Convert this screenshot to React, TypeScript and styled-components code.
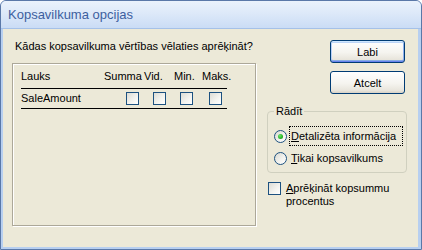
import * as React from "react";
import styled, { createGlobalStyle } from "styled-components";

const GlobalStyle = createGlobalStyle`
  html, body {
    margin: 0;
    padding: 0;
    background: #ffffff;
  }
  body {
    font-family: "Liberation Sans", Arial, sans-serif;
    font-size: 11px;
    line-height: 13px;
    color: #000000;
  }
`;

const Window = styled.div`
  box-sizing: border-box;
  width: 422px;
  height: 250px;
  display: flex;
  flex-direction: column;
  border: 1px solid #5a78a8;
  border-radius: 6px 6px 0 0;
  background: #b7cff0;
  overflow: hidden;
`;

const TitleBar = styled.div`
  flex: none;
  height: 27px;
  display: flex;
  align-items: center;
  padding-left: 7px;
  background: linear-gradient(to bottom, #eaf2fc 0%, #dde9f9 45%, #cadcf5 100%);
  border-bottom: 1px solid #a5c1e8;
  color: #3d5f9f;
  font-size: 13px;
`;

const Frame = styled.div`
  flex: 1;
  display: flex;
  padding: 0 3px 2px 2px;
`;

const Body = styled.div`
  flex: 1;
  display: flex;
  background: #ece9d8;
`;

const LeftCol = styled.div`
  width: 244px;
  margin-left: 9px;
  padding-top: 11px;
  display: flex;
  flex-direction: column;
`;

const Question = styled.div`
  margin-left: 3px;
  white-space: nowrap;
`;

const ListBox = styled.div`
  box-sizing: border-box;
  height: 163px;
  margin-top: 10px;
  border: 1px solid #aca899;
  box-shadow: inset 1px 1px 0 #ffffff, 1px 1px 0 #ffffff;
`;

const Row = styled.div<{ $cols: string; $head?: boolean }>`
  display: grid;
  grid-template-columns: ${(p) => p.$cols};
  align-items: ${(p) => (p.$head ? "end" : "center")};
  width: 206px;
  margin-left: 8px;
  height: ${(p) => (p.$head ? "19px" : "19px")};
  padding-bottom: ${(p) => (p.$head ? "5px" : "0")};
  border-bottom: 1px solid #000000;
  white-space: nowrap;
`;

const CheckBox = styled.span`
  box-sizing: border-box;
  display: block;
  width: 13px;
  height: 13px;
  border: 1px solid #1c5180;
  background: linear-gradient(135deg, #dcdcd5 0%, #f4f4f0 60%, #ffffff 100%);
`;

const RightCol = styled.div`
  width: 140px;
  margin-left: 11px;
  padding-top: 11px;
  display: flex;
  flex-direction: column;
`;

const ButtonStack = styled.div`
  align-self: flex-end;
  margin-right: 2px;
  display: flex;
  flex-direction: column;
  gap: 8px;
`;

const Button = styled.button<{ $default?: boolean }>`
  box-sizing: border-box;
  width: 75px;
  height: 23px;
  padding: 0;
  border: 1px solid #003c74;
  border-radius: 3px;
  background: linear-gradient(to bottom, #ffffff 0%, #f5f4ef 55%, #e8e5dc 88%, #d8d2c6 100%);
  box-shadow: ${(p) =>
    p.$default
      ? "inset 0 1px 0 #cee7ff, inset 0 -1px 0 #6982ee, inset 1px 0 0 #b8d0f8, inset -1px 0 0 #8eb0ee, inset 0 2px 0 #bcd4f6, inset 0 -2px 0 #89ade4"
      : "none"};
  font-family: "Liberation Sans", Arial, sans-serif;
  font-size: 11px;
  color: #000000;
  cursor: pointer;
`;

const Group = styled.fieldset`
  margin: 11px 0 0 0;
  min-width: 0;
  padding: 7px 3px 3px 6px;
  border: 1px solid #d0d0bf;
  border-radius: 4px;
`;

const Legend = styled.legend`
  padding: 0 2px;
  font-size: 11px;
  line-height: 13px;
`;

const OptionRow = styled.div`
  height: 22px;
  display: flex;
  align-items: center;
`;

const Radio = styled.span<{ $checked?: boolean }>`
  box-sizing: border-box;
  flex: none;
  width: 13px;
  height: 13px;
  border: 1px solid #1c5180;
  border-radius: 50%;
  display: flex;
  align-items: center;
  justify-content: center;
  background: linear-gradient(135deg, #d8d8d0 0%, #f2f2ee 55%, #ffffff 100%);

  &::after {
    content: "";
    display: ${(p) => (p.$checked ? "block" : "none")};
    width: 5px;
    height: 5px;
    border-radius: 50%;
    background: radial-gradient(circle at 35% 35%, #6ee36e 0%, #2ab82a 55%, #178a17 100%);
  }
`;

const OptionLabel = styled.span<{ $focus?: boolean }>`
  box-sizing: border-box;
  flex: 1;
  height: 20px;
  margin-left: 2px;
  padding: 0 1px;
  display: flex;
  align-items: center;
  border: 1px dotted ${(p) => (p.$focus ? "#000000" : "transparent")};
  white-space: nowrap;
`;

const CheckRow = styled.div`
  margin-top: 9px;
  margin-left: 1px;
  display: flex;
  align-items: flex-start;
  gap: 5px;
`;

const CheckText = styled.span`
  width: 118px;
`;

const App = () => {
  const headCols = "83px 40px 30px 28px auto";
  const rowCols = "105px 27px 27px 29px auto";

  return (
    <>
      <GlobalStyle />
      <Window>
        <TitleBar>Kopsavilkuma opcijas</TitleBar>
        <Frame>
          <Body>
            <LeftCol>
              <Question>Kādas kopsavilkuma vērtības vēlaties aprēķināt?</Question>
              <ListBox>
                <Row $cols={headCols} $head>
                  <span>Lauks</span>
                  <span>Summa</span>
                  <span>Vid.</span>
                  <span>Min.</span>
                  <span>Maks.</span>
                </Row>
                <Row $cols={rowCols}>
                  <span>SaleAmount</span>
                  <CheckBox />
                  <CheckBox />
                  <CheckBox />
                  <CheckBox />
                </Row>
              </ListBox>
            </LeftCol>
            <RightCol>
              <ButtonStack>
                <Button $default>Labi</Button>
                <Button>Atcelt</Button>
              </ButtonStack>
              <Group>
                <Legend>Rādīt</Legend>
                <OptionRow>
                  <Radio $checked />
                  <OptionLabel $focus>
                    <span>
                      <u>D</u>etalizēta informācija
                    </span>
                  </OptionLabel>
                </OptionRow>
                <OptionRow>
                  <Radio />
                  <OptionLabel>
                    <span>
                      <u>T</u>ikai kopsavilkums
                    </span>
                  </OptionLabel>
                </OptionRow>
              </Group>
              <CheckRow>
                <CheckBox />
                <CheckText>
                  <u>A</u>prēķināt kopsummu procentus
                </CheckText>
              </CheckRow>
            </RightCol>
          </Body>
        </Frame>
      </Window>
    </>
  );
};

export default App;
